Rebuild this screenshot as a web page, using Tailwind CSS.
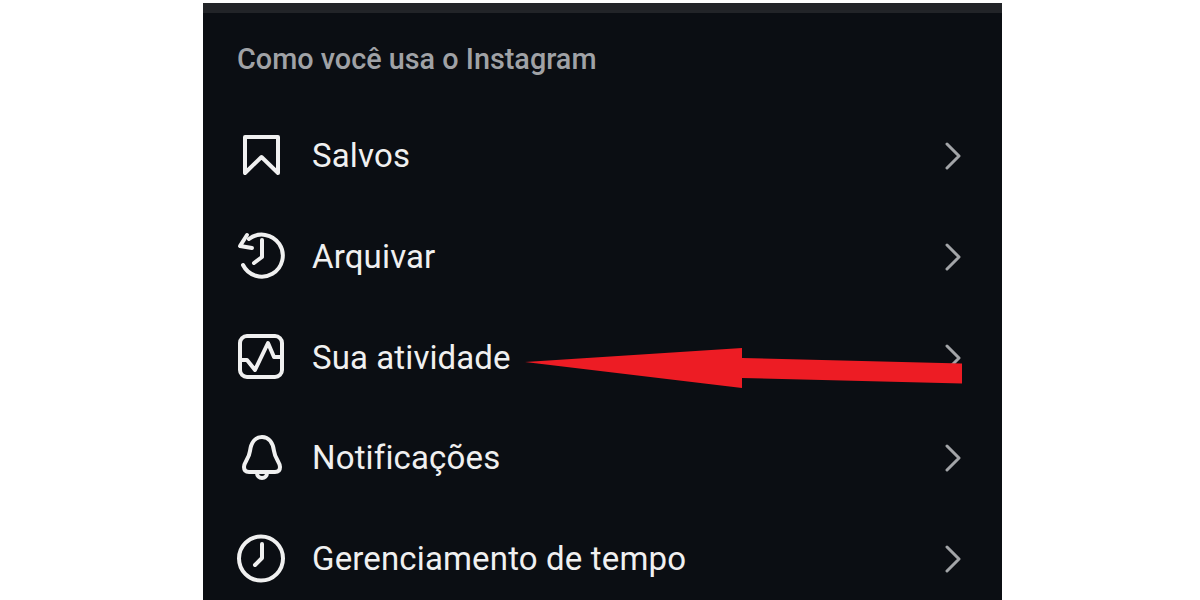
<!DOCTYPE html>
<html lang="pt">

<head>
    <meta charset="UTF-8">
    <title>Como você usa o Instagram</title>
    <script src="https://cdn.jsdelivr.net/npm/@tailwindcss/browser@4"></script>
</head>

<body class="bg-white overflow-hidden">
    <div class="relative w-[1200px] h-[600px] overflow-hidden font-['Roboto',sans-serif]">
        <div class="ml-[203px] mt-[3px] w-[799px] h-[597px] bg-[#0b0e13] flex flex-col">
            <div class="h-[10px] shrink-0 bg-[#222428]"></div>
            <h2 class="pl-[34px] pt-[28px] h-[93px] shrink-0 text-[28.800px] leading-[36px] font-medium text-[#a0a2a6]">Como você usa o Instagram</h2>

            <div class="h-[100.700px] shrink-0 flex items-center pl-[30px] pr-[37px] text-[#f0f0f0]">
                <svg class="w-[58px] h-[58px]" viewBox="0 0 58 58" fill="none" stroke="currentColor" stroke-width="4" stroke-linejoin="round" stroke-linecap="round">
                    <path d="M12 10H45V46L28.500 30L12 46Z" />
                </svg>
                <span class="ml-[21px] flex-1 text-[33px] leading-[40px] tracking-[0.150px]">Salvos</span>
                <svg class="w-[20px] h-[32px] text-[#a3a5a8]" viewBox="0 0 20 32" fill="none" stroke="currentColor" stroke-width="3" stroke-linecap="round" stroke-linejoin="round">
                    <path d="M2 4L14 16L2 28" />
                </svg>
            </div>

            <div class="h-[100.700px] shrink-0 flex items-center pl-[30px] pr-[37px] text-[#f0f0f0]">
                <svg class="w-[58px] h-[58px]" viewBox="0 0 58 58" fill="none" stroke="currentColor" stroke-width="4" stroke-linejoin="round" stroke-linecap="round">
                    <path d="M16 11A21 21 0 1 1 10 37" />
                    <path d="M14 7L7 18L19 20" />
                    <path d="M29 12V29L21 35" />
                </svg>
                <span class="ml-[21px] flex-1 text-[33px] leading-[40px] tracking-[0.150px]">Arquivar</span>
                <svg class="w-[20px] h-[32px] text-[#a3a5a8]" viewBox="0 0 20 32" fill="none" stroke="currentColor" stroke-width="3" stroke-linecap="round" stroke-linejoin="round">
                    <path d="M2 4L14 16L2 28" />
                </svg>
            </div>

            <div class="h-[100.700px] shrink-0 flex items-center pl-[30px] pr-[37px] text-[#f0f0f0]">
                <svg class="w-[58px] h-[58px]" viewBox="0 0 58 58" fill="none" stroke="currentColor" stroke-width="4" stroke-linejoin="round" stroke-linecap="round">
                    <rect x="7" y="7" width="42" height="41" rx="7" />
                    <path d="M7 31H14L22 41L35 14L41 28H49" />
                </svg>
                <span class="ml-[21px] flex-1 text-[33px] leading-[40px] tracking-[0.100px]">Sua atividade</span>
                <svg class="w-[20px] h-[32px] text-[#a3a5a8]" viewBox="0 0 20 32" fill="none" stroke="currentColor" stroke-width="3" stroke-linecap="round" stroke-linejoin="round">
                    <path d="M2 4L14 16L2 28" />
                </svg>
            </div>

            <div class="h-[100.700px] shrink-0 flex items-center pl-[30px] pr-[37px] text-[#f0f0f0]">
                <svg class="w-[58px] h-[58px]" viewBox="0 0 58 58" fill="none" stroke="currentColor" stroke-width="4" stroke-linejoin="round" stroke-linecap="round">
                    <path d="M29 8C22 8 18 14 17 22C16 30 11 33 11 38C11 42 13 43 16 43H42C45 43 47 42 47 38C47 33 42 30 41 22C40 14 36 8 29 8Z" />
                    <path d="M24 44A5 5 0 0 0 34 44" />
                </svg>
                <span class="ml-[21px] flex-1 text-[33px] leading-[40px] tracking-[0.150px]">Notificações</span>
                <svg class="w-[20px] h-[32px] text-[#a3a5a8]" viewBox="0 0 20 32" fill="none" stroke="currentColor" stroke-width="3" stroke-linecap="round" stroke-linejoin="round">
                    <path d="M2 4L14 16L2 28" />
                </svg>
            </div>

            <div class="h-[100.700px] shrink-0 flex items-center pl-[30px] pr-[37px] text-[#f0f0f0]">
                <svg class="w-[58px] h-[58px]" viewBox="0 0 58 58" fill="none" stroke="currentColor" stroke-width="4" stroke-linejoin="round" stroke-linecap="round">
                    <circle cx="28" cy="28.500" r="22" />
                    <path d="M29 14V28L22 35" />
                </svg>
                <span class="ml-[21px] flex-1 text-[33px] leading-[40px] tracking-[0.150px]">Gerenciamento de tempo</span>
                <svg class="w-[20px] h-[32px] text-[#a3a5a8]" viewBox="0 0 20 32" fill="none" stroke="currentColor" stroke-width="3" stroke-linecap="round" stroke-linejoin="round">
                    <path d="M2 4L14 16L2 28" />
                </svg>
            </div>
        </div>

        <!-- red arrow drawn over the list -->
        <svg class="absolute left-0 top-0 w-[1200px] h-[600px] pointer-events-none" viewBox="0 0 1200 600">
            <polygon fill="#ed1c24" points="525,362 742,348 742,358 962,363.500 962,383.500 742,378 742,388" />
        </svg>
    </div>
</body>

</html>
